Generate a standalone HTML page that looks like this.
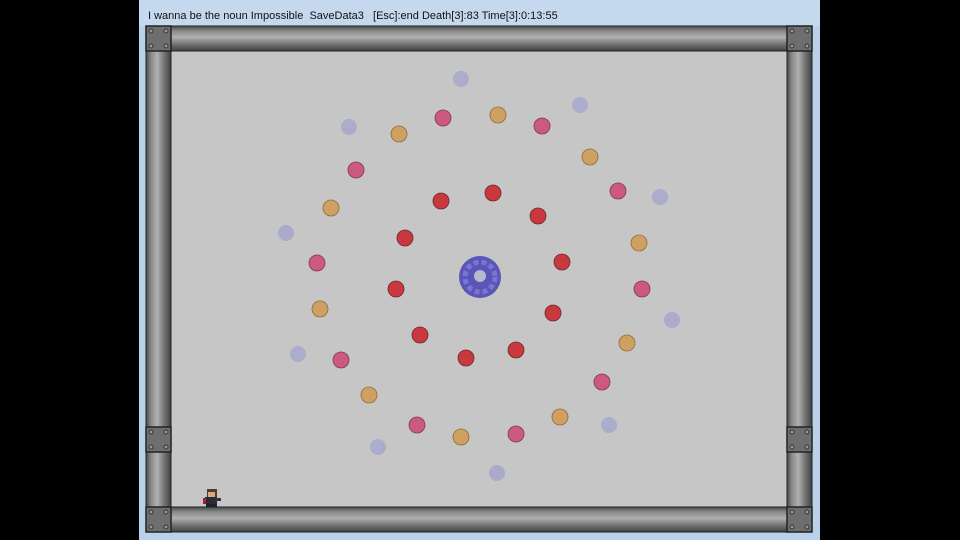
<!DOCTYPE html><html><head><style>body{margin:0;background:#000;width:960px;height:540px;overflow:hidden;font-family:"Liberation Sans",sans-serif}</style></head><body>
<svg width="960" height="540" xmlns="http://www.w3.org/2000/svg" style="position:absolute;left:0;top:0">
<defs>
<linearGradient id="h" x1="0" y1="0" x2="0" y2="1"><stop offset="0" stop-color="#4a4a4a"/><stop offset=".2" stop-color="#8a8a8a"/><stop offset=".45" stop-color="#b0b0b0"/><stop offset=".7" stop-color="#7a7a7a"/><stop offset="1" stop-color="#404040"/></linearGradient>
<linearGradient id="v" x1="0" y1="0" x2="1" y2="0"><stop offset="0" stop-color="#4a4a4a"/><stop offset=".2" stop-color="#8a8a8a"/><stop offset=".45" stop-color="#b0b0b0"/><stop offset=".7" stop-color="#7a7a7a"/><stop offset="1" stop-color="#404040"/></linearGradient>
<g id="blk"><rect width="25" height="25" fill="#6e6e6e" stroke="#222" stroke-width="1.5"/><g fill="#999" stroke="#333"><circle cx="5" cy="5" r="2"/><circle cx="20" cy="5" r="2"/><circle cx="5" cy="20" r="2"/><circle cx="20" cy="20" r="2"/></g></g>
</defs>
<rect x="139" y="0" width="681" height="540" fill="#b9d1ea"/>
<rect x="139" y="0" width="681" height="26" fill="#c5d9ee"/>
<text x="148" y="19" font-size="11" fill="#111" xml:space="preserve" font-family="Liberation Sans, sans-serif">I wanna be the noun Impossible  SaveData3   [Esc]:end Death[3]:83 Time[3]:0:13:55</text>
<rect x="146" y="26" width="666" height="507" fill="#c6c6c6"/>
<rect x="171" y="26" width="616" height="25" fill="url(#h)" stroke="#222"/>
<rect x="171" y="507" width="616" height="25" fill="url(#h)" stroke="#222"/>
<rect x="146" y="51" width="25" height="456" fill="url(#v)" stroke="#222"/>
<rect x="787" y="51" width="25" height="456" fill="url(#v)" stroke="#222"/>
<use href="#blk" x="146" y="26"/><use href="#blk" x="787" y="26"/><use href="#blk" x="146" y="507"/><use href="#blk" x="787" y="507"/><use href="#blk" x="146" y="427"/><use href="#blk" x="787" y="427"/>
<g fill="#a9a8cc" opacity=".9">
<circle cx="461" cy="79" r="8"/><circle cx="580" cy="105" r="8"/><circle cx="349" cy="127" r="8"/><circle cx="660" cy="197" r="8"/><circle cx="286" cy="233" r="8"/><circle cx="672" cy="320" r="8"/><circle cx="298" cy="354" r="8"/><circle cx="609" cy="425" r="8"/><circle cx="378" cy="447" r="8"/><circle cx="497" cy="473" r="8"/></g>
<g fill="#cfa060" stroke="#8a6a40" stroke-width=".8">
<circle cx="498" cy="115" r="8"/><circle cx="399" cy="134" r="8"/><circle cx="590" cy="157" r="8"/><circle cx="331" cy="208" r="8"/><circle cx="639" cy="243" r="8"/><circle cx="320" cy="309" r="8"/><circle cx="627" cy="343" r="8"/><circle cx="369" cy="395" r="8"/><circle cx="560" cy="417" r="8"/><circle cx="461" cy="437" r="8"/></g>
<g fill="#cc5a80" stroke="#7a3a50" stroke-width=".8">
<circle cx="443" cy="118" r="8"/><circle cx="542" cy="126" r="8"/><circle cx="356" cy="170" r="8"/><circle cx="618" cy="191" r="8"/><circle cx="317" cy="263" r="8"/><circle cx="642" cy="289" r="8"/><circle cx="341" cy="360" r="8"/><circle cx="602" cy="382" r="8"/><circle cx="417" cy="425" r="8"/><circle cx="516" cy="434" r="8"/></g>
<g fill="#c8383e" stroke="#6a2a2a" stroke-width=".8">
<circle cx="493" cy="193" r="8"/><circle cx="441" cy="201" r="8"/><circle cx="538" cy="216" r="8"/><circle cx="405" cy="238" r="8"/><circle cx="562" cy="262" r="8"/><circle cx="396" cy="289" r="8"/><circle cx="553" cy="313" r="8"/><circle cx="420" cy="335" r="8"/><circle cx="516" cy="350" r="8"/><circle cx="466" cy="358" r="8"/></g>
<circle cx="480" cy="277" r="21" fill="#5a55b8"/><circle cx="480" cy="277" r="15" fill="none" stroke="#7a75d0" stroke-width="5" stroke-dasharray="5 3"/><circle cx="480" cy="276" r="6" fill="#b8b8c8"/>
<g transform="translate(203,489)"><rect x="4" y="0" width="10" height="8" fill="#5a3a2a"/><rect x="5" y="3" width="7" height="5" fill="#d8a888"/><rect x="2" y="8" width="12" height="7" fill="#2a2a3a"/><rect x="0" y="9" width="3" height="6" fill="#a02040"/><rect x="12" y="9" width="6" height="3" fill="#333"/><rect x="3" y="15" width="11" height="3" fill="#222"/></g>
</svg>
</body></html>
